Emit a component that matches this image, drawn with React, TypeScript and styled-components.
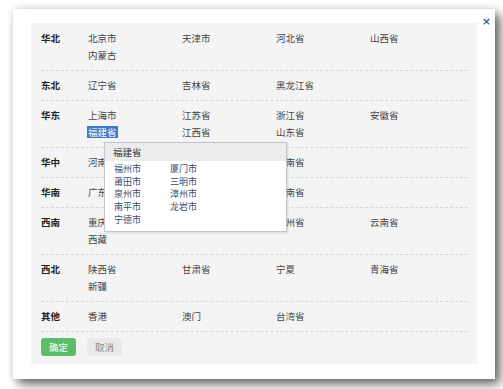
import React from "react";
import styled, { createGlobalStyle } from "styled-components";

type Region = {
  name: string;
  cities: string[];
};

const regions: Region[] = [
  { name: "华北", cities: ["北京市", "天津市", "河北省", "山西省", "内蒙古"] },
  { name: "东北", cities: ["辽宁省", "吉林省", "黑龙江省"] },
  {
    name: "华东",
    cities: ["上海市", "江苏省", "浙江省", "安徽省", "福建省", "江西省", "山东省"],
  },
  { name: "华中", cities: ["河南省", "湖北省", "湖南省"] },
  { name: "华南", cities: ["广东省", "广西壮族自治区", "海南省"] },
  { name: "西南", cities: ["重庆市", "四川省", "贵州省", "云南省", "西藏"] },
  { name: "西北", cities: ["陕西省", "甘肃省", "宁夏", "青海省", "新疆"] },
  { name: "其他", cities: ["香港", "澳门", "台湾省"] },
];

const fujian = ["福州市", "厦门市", "莆田市", "三明市", "泉州市", "漳州市", "南平市", "龙岩市", "宁德市"];

const GlobalStyle = createGlobalStyle`
  body {
    margin: 0;
    background: #ffffff;
    font-family: "Noto Sans CJK SC", "Noto Sans", sans-serif;
  }
`;

const Page = styled.div`
  padding: 9px 0 0 13px;
  width: 503px;
  height: 389px;
  box-sizing: border-box;
`;

const Dialog = styled.div`
  position: relative;
  width: 482px;
  height: 370px;
  box-sizing: border-box;
  padding: 14px 18px 15px;
  background: #ffffff;
  box-shadow: 5px 5px 10px rgba(0, 0, 0, 0.62), 0 0 6px rgba(0, 0, 0, 0.08);
`;

const Close = styled.span`
  position: absolute;
  top: 7px;
  right: 4px;
  font-size: 11px;
  line-height: 11px;
  font-weight: bold;
  color: #2c5fb4;
  font-family: "DejaVu Sans", sans-serif;
`;

const Panel = styled.div`
  height: 100%;
  box-sizing: border-box;
  background: #f4f4f4;
  padding: 1px 9px 8px 10px;
`;

const Row = styled.div`
  display: flex;
  padding: 6px 0;
  border-bottom: 1px dashed #d6d6d6;
  font-size: 9.5px;
  line-height: 17px;
`;

const Label = styled.div`
  width: 47px;
  flex: none;
  font-weight: bold;
  color: #222;
`;

const Cities = styled.div`
  display: grid;
  grid-template-columns: repeat(4, 94px);
  color: #444;
`;

const City = styled.div`
  position: relative;
`;

const Selected = styled.span`
  margin-left: -1px;
  padding: 0 1px;
  display: inline-block;
  line-height: 12px;
  background: #3f78c6;
  color: #fff;
`;

const Popup = styled.div`
  position: absolute;
  z-index: 2;
  top: 18px;
  left: 16px;
  width: 183px;
  box-sizing: border-box;
  border: 1px solid #c4c4cc;
  background: #fff;
  box-shadow: 1px 1px 2px rgba(0, 0, 0, 0.12);
`;

const PopupHead = styled.div`
  background: #ececec;
  padding-left: 8px;
  height: 18px;
  line-height: 18px;
  color: #333;
`;

const PopupBody = styled.div`
  display: grid;
  grid-template-columns: repeat(2, 56px);
  padding: 2px 0 4px 9px;
  font-size: 9px;
  line-height: 12.7px;
  color: #3e4a6a;
`;

const Actions = styled.div`
  display: flex;
  gap: 11px;
  margin-top: 6px;
`;

const Button = styled.button<{ $primary?: boolean }>`
  width: 35px;
  height: 18px;
  padding: 0;
  border: none;
  border-radius: 3px;
  font-family: inherit;
  font-size: 9.5px;
  background: ${(p) => (p.$primary ? "#5cbd6a" : "#e9e9e9")};
  color: ${(p) => (p.$primary ? "#ffffff" : "#888888")};
`;

function App() {
  return (
    <Page>
      <GlobalStyle />
      <Dialog>
        <Close>×</Close>
        <Panel>
          {regions.map((r) => (
            <Row key={r.name}>
              <Label>{r.name}</Label>
              <Cities>
                {r.cities.map((c) =>
                  c === "福建省" ? (
                    <City key={c}>
                      <Selected>{c}</Selected>
                      <Popup>
                        <PopupHead>福建省</PopupHead>
                        <PopupBody>
                          {fujian.map((f) => (
                            <div key={f}>{f}</div>
                          ))}
                        </PopupBody>
                      </Popup>
                    </City>
                  ) : (
                    <City key={c}>{c}</City>
                  )
                )}
              </Cities>
            </Row>
          ))}
          <Actions>
            <Button $primary>确定</Button>
            <Button>取消</Button>
          </Actions>
        </Panel>
      </Dialog>
    </Page>
  );
}

export default App;
